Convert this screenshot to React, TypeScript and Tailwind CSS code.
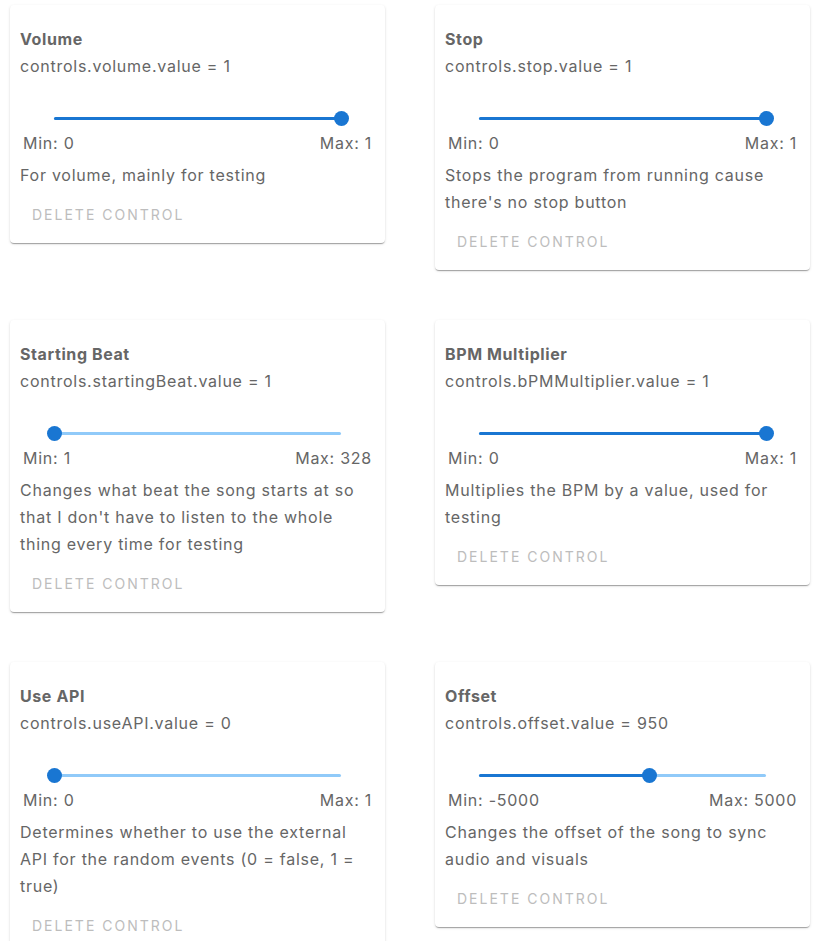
import React from 'react';

interface Control {
  title: string;
  name: string;
  value: number;
  min: number;
  max: number;
  description: string;
}

const controls: Control[] = [
  { title: 'Volume', name: 'volume', value: 1, min: 0, max: 1, description: 'For volume, mainly for testing' },
  { title: 'Stop', name: 'stop', value: 1, min: 0, max: 1, description: "Stops the program from running cause there's no stop button" },
  { title: 'Starting Beat', name: 'startingBeat', value: 1, min: 1, max: 328, description: "Changes what beat the song starts at so that I don't have to listen to the whole thing every time for testing" },
  { title: 'BPM Multiplier', name: 'bPMMultiplier', value: 1, min: 0, max: 1, description: 'Multiplies the BPM by a value, used for testing' },
  { title: 'Use API', name: 'useAPI', value: 0, min: 0, max: 1, description: 'Determines whether to use the external API for the random events (0 = false, 1 = true)' },
  { title: 'Offset', name: 'offset', value: 950, min: -5000, max: 5000, description: 'Changes the offset of the song to sync audio and visuals' },
];

function Slider({ value, min, max }: { value: number; min: number; max: number }) {
  const pct = ((value - min) / (max - min)) * 100;
  return (
    <div className="h-[50px] flex justify-center">
      <div className="relative w-[287px] h-full">
        {/* rail */}
        <div className="absolute left-0 right-0 top-[37px] h-[3px] rounded-full bg-[#90caf9]" />
        {/* track */}
        <div
          className="absolute left-0 top-[37px] h-[3px] rounded-full bg-[#1976d2]"
          style={{ width: `${pct}%` }}
        />
        {/* thumb */}
        <div
          className="absolute top-[31px] w-[15px] h-[15px] -ml-[7.5px] rounded-full bg-[#1976d2]"
          style={{ left: `${pct}%` }}
        />
      </div>
    </div>
  );
}

function ControlCard({ control }: { control: Control }) {
  return (
    <div className="w-[375px] bg-white rounded-[4px] shadow-[0_2px_1px_-1px_rgba(0,0,0,0.2),0_1px_1px_0_rgba(0,0,0,0.14),0_1px_3px_0_rgba(0,0,0,0.12)]">
      <div className="pt-[21px] px-[10px] text-[16px] leading-[27px] tracking-[0.75px] text-[#666666]">
        <div className="font-bold tracking-[0.6px]">{control.title}</div>
        <div>
          controls.{control.name}.value = {control.value}
        </div>
        <Slider value={control.value} min={control.min} max={control.max} />
        <div className="flex justify-between px-[3px]">
          <span>Min: {control.min}</span>
          <span>Max: {control.max}</span>
        </div>
        <p className="mt-[5px]">{control.description}</p>
      </div>
      <div className="pt-[8px] pb-[10px] pl-[10px]">
        <button
          disabled
          className="px-[12px] py-[6px] text-[14px] leading-[24px] font-normal uppercase tracking-[2px] text-[#bdbdbd]"
        >
          Delete Control
        </button>
      </div>
    </div>
  );
}

export default function App() {
  return (
    <div
      className="min-h-screen bg-white pl-[10px] pt-[5px]"
      style={{ fontFamily: 'Inter, "Noto Sans", sans-serif' }}
    >
      <div className="grid grid-cols-[375px_375px] gap-x-[50px] gap-y-[50px] items-start">
        {controls.map((c) => (
          <ControlCard key={c.name} control={c} />
        ))}
      </div>
    </div>
  );
}
